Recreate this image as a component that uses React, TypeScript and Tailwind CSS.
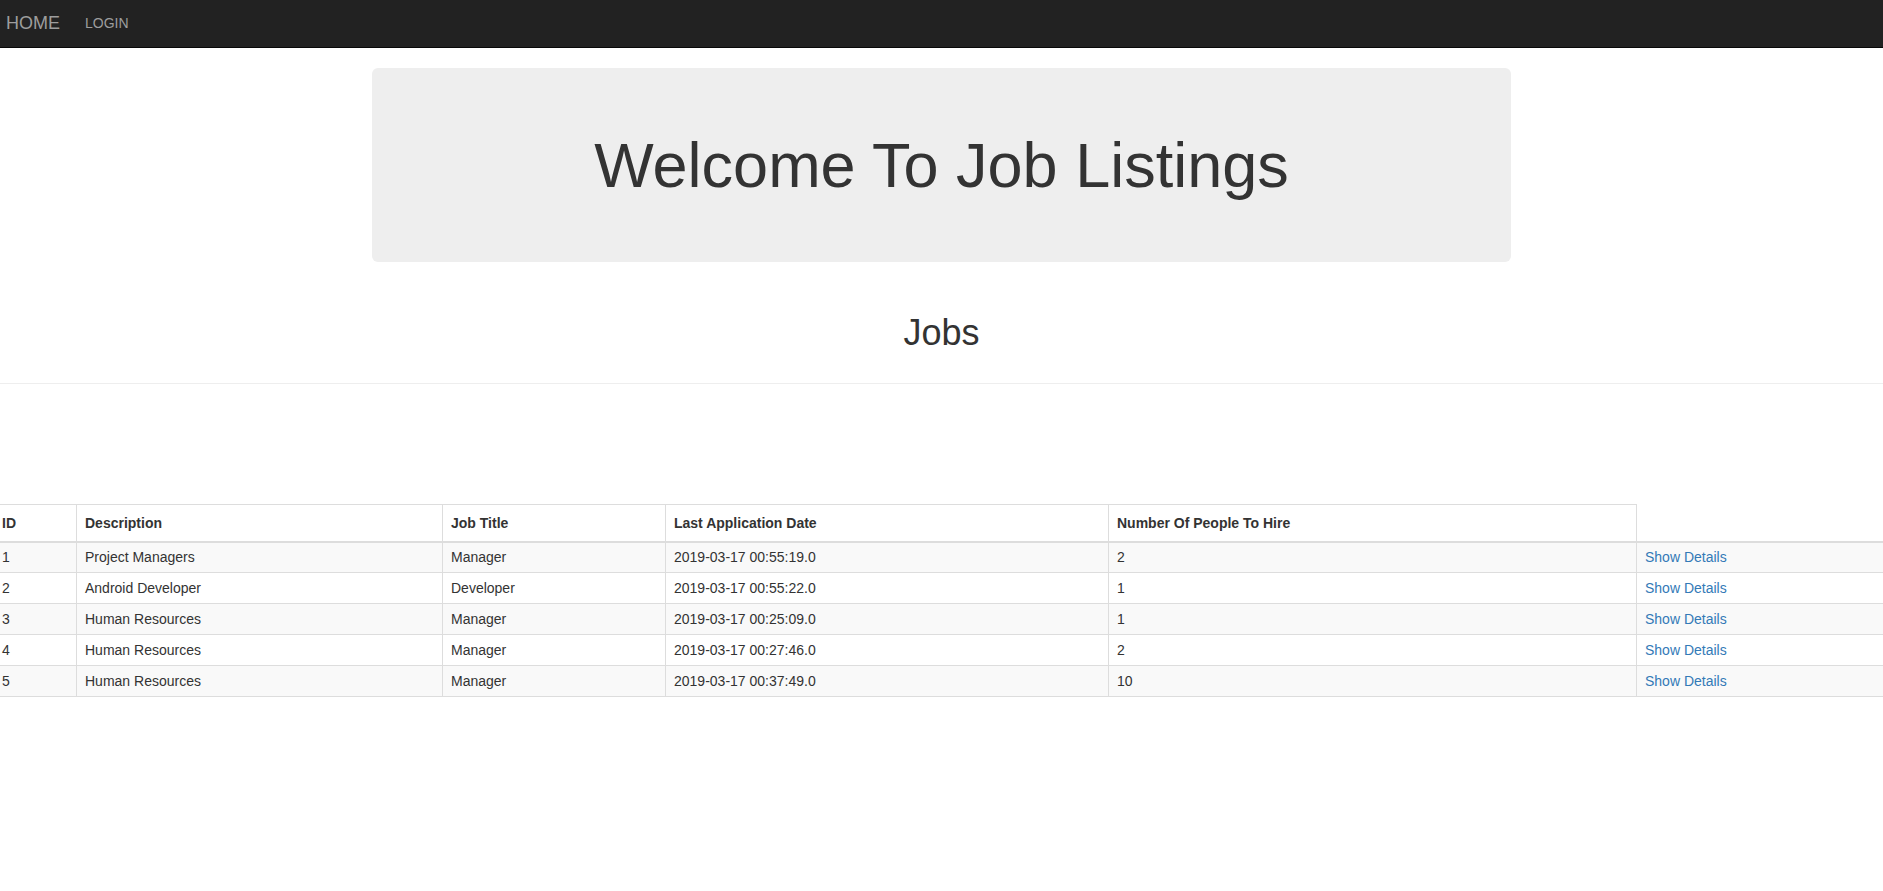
export default function App() {
  const jobs = [
    { id: 1, desc: 'Project Managers', title: 'Manager', date: '2019-03-17 00:55:19.0', n: '2' },
    { id: 2, desc: 'Android Developer', title: 'Developer', date: '2019-03-17 00:55:22.0', n: '1' },
    { id: 3, desc: 'Human Resources', title: 'Manager', date: '2019-03-17 00:25:09.0', n: '1' },
    { id: 4, desc: 'Human Resources', title: 'Manager', date: '2019-03-17 00:27:46.0', n: '2' },
    { id: 5, desc: 'Human Resources', title: 'Manager', date: '2019-03-17 00:37:49.0', n: '10' },
  ];
  const cols = ['w-[83px]', 'w-[366px]', 'w-[223px]', 'w-[443px]', 'w-[528px]', ''];

  return (
    <div className="min-h-screen bg-white text-[#333] overflow-hidden" style={{ fontFamily: '"Liberation Sans", Arial, sans-serif' }}>
      {/* Navbar */}
      <div className="h-[48px] bg-[#222] border-b border-[#080808] flex items-center">
        <a className="pl-[6px] text-[18px] text-[#9d9d9d]">HOME</a>
        <a className="pl-[25px] text-[14px] text-[#9d9d9d]">LOGIN</a>
      </div>

      {/* Jumbotron */}
      <div className="mt-[20px] mx-auto w-[1139px] h-[194px] bg-[#eee] rounded-[6px] flex items-center justify-center">
        <h1 className="text-[63px] leading-none text-[#333]">Welcome To Job Listings</h1>
      </div>

      <h2 className="mt-[51px] text-center text-[36px] leading-[40px]">Jobs</h2>
      <hr className="mt-[30px] border-t border-[#eee]" />

      <table className="mt-[120px] ml-[-7px] w-[1890px] border-collapse text-[14px] leading-[20px]">
        <thead>
          <tr>
            {['ID', 'Description', 'Job Title', 'Last Application Date', 'Number Of People To Hire'].map((h, i) => (
              <th key={h} className={`${cols[i]} h-[37px] px-[8px] text-left font-bold border border-[#ddd] border-b-2`}>{h}</th>
            ))}
            <th className="border-b-2 border-[#ddd]"></th>
          </tr>
        </thead>
        <tbody>
          {jobs.map((j, r) => (
            <tr key={j.id} className={r % 2 === 0 ? 'bg-[#f9f9f9]' : 'bg-white'}>
              <td className="h-[31px] px-[8px] border border-[#ddd]">{j.id}</td>
              <td className="px-[8px] border border-[#ddd]">{j.desc}</td>
              <td className="px-[8px] border border-[#ddd]">{j.title}</td>
              <td className="px-[8px] border border-[#ddd]">{j.date}</td>
              <td className="px-[8px] border border-[#ddd]">{j.n}</td>
              <td className="px-[8px] border-y border-l border-[#ddd]"><a className="text-[#337ab7]">Show Details</a></td>
            </tr>
          ))}
        </tbody>
      </table>
    </div>
  );
}
